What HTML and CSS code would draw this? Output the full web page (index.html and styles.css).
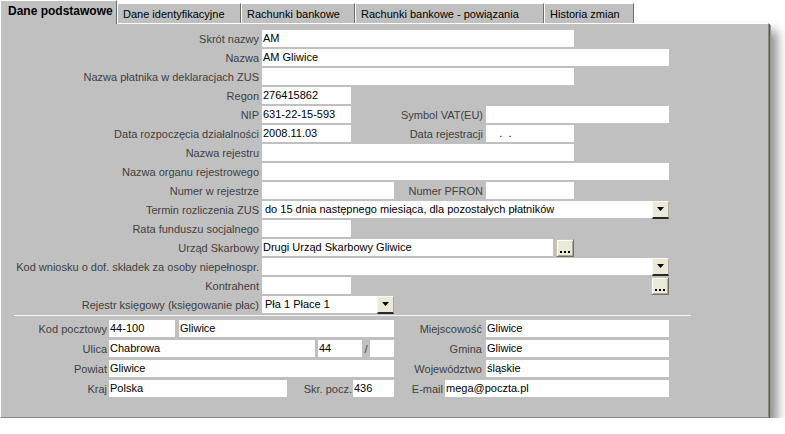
FILE: index.html
```html
<!DOCTYPE html>
<html lang="pl">
<head>
<meta charset="utf-8">
<title>Dane podstawowe</title>
<link rel="stylesheet" href="styles.css">
</head>
<body>
<div class="window">
  <div class="tabs">
    <div class="tab active w1">Dane podstawowe</div>
    <div class="tab w2">Dane identyfikacyjne</div>
    <div class="tab w3">Rachunki bankowe</div>
    <div class="tab w4">Rachunki bankowe - powiązania</div>
    <div class="tab w5">Historia zmian</div>
  </div>
  <div class="panel">
    <div class="row"><span class="lbl">Skrót nazwy</span><span class="inp w312">AM</span></div>
    <div class="row"><span class="lbl">Nazwa</span><span class="inp w407">AM Gliwice</span></div>
    <div class="row"><span class="lbl">Nazwa płatnika w deklaracjach ZUS</span><span class="inp w312"></span></div>
    <div class="row"><span class="lbl">Regon</span><span class="inp w89">276415862</span></div>
    <div class="row"><span class="lbl">NIP</span><span class="inp w89">631-22-15-593</span><span class="vlbl v132">Symbol VAT(EU)</span><span class="inp w183"></span></div>
    <div class="row"><span class="lbl">Data rozpoczęcia działalności</span><span class="inp w89">2008.11.03</span><span class="vlbl v132">Data rejestracji</span><span class="inp w88 pre">    .  .</span></div>
    <div class="row"><span class="lbl">Nazwa rejestru</span><span class="inp w312"></span></div>
    <div class="row"><span class="lbl">Nazwa organu rejestrowego</span><span class="inp w407"></span></div>
    <div class="row"><span class="lbl">Numer w rejestrze</span><span class="inp w132"></span><span class="vlbl v89">Numer PFRON</span><span class="inp w88"></span></div>
    <div class="row"><span class="lbl">Termin rozliczenia ZUS</span><span class="sel w407"><span class="seltxt">do 15 dnia następnego miesiąca, dla pozostałych płatników</span><span class="drop"><svg width="8" height="5" viewBox="0 0 8 5"><path d="M0 0H7L3.5 4Z" fill="#000"/></svg></span></span></div>
    <div class="row"><span class="lbl">Rata funduszu socjalnego</span><span class="inp w89"></span></div>
    <div class="row"><span class="lbl">Urząd Skarbowy</span><span class="inp w291">Drugi Urząd Skarbowy Gliwice</span><span class="dots gap3"><svg width="12" height="2" viewBox="0 0 12 2"><rect x="1" width="2" height="2"/><rect x="5" width="2" height="2"/><rect x="9" width="2" height="2"/></svg></span></div>
    <div class="row"><span class="lbl">Kod wniosku o dof. składek za osoby niepełnospr.</span><span class="sel w407"><span class="seltxt"></span><span class="drop"><svg width="8" height="5" viewBox="0 0 8 5"><path d="M0 0H7L3.5 4Z" fill="#000"/></svg></span></span></div>
    <div class="row"><span class="lbl">Kontrahent</span><span class="inp w89"></span><span class="dots gap300"><svg width="12" height="2" viewBox="0 0 12 2"><rect x="1" width="2" height="2"/><rect x="5" width="2" height="2"/><rect x="9" width="2" height="2"/></svg></span></div>
    <div class="row"><span class="lbl">Rejestr księgowy (księgowanie płac)</span><span class="sel w132"><span class="seltxt">Pła 1 Płace 1</span><span class="drop"><svg width="8" height="5" viewBox="0 0 8 5"><path d="M0 0H7L3.5 4Z" fill="#000"/></svg></span></span></div>

    <div class="sep"></div>

    <div class="brow"><span class="blbl">Kod pocztowy</span><span class="inp w66">44-100</span><span class="inp w215 ml4">Gliwice</span><span class="rlbl">Miejscowość</span><span class="inp w183">Gliwice</span></div>
    <div class="brow"><span class="blbl">Ulica</span><span class="inp w206">Chabrowa</span><span class="inp w44 ml3">44</span><span class="slash">/</span><span class="inp w24"></span><span class="rlbl">Gmina</span><span class="inp w183">Gliwice</span></div>
    <div class="brow"><span class="blbl">Powiat</span><span class="inp w285">Gliwice</span><span class="rlbl">Województwo</span><span class="inp w183">śląskie</span></div>
    <div class="brow"><span class="blbl">Kraj</span><span class="inp w178">Polska</span><span class="klbl">Skr. pocz.</span><span class="inp w41">436</span><span class="elbl">E-mail</span><span class="inp w224">mega@poczta.pl</span></div>
  </div>
</div>
</body>
</html>
```
FILE: styles.css
```css
body {
  margin: 0;
  background: #fff;
  font-family: "Liberation Sans", Arial, sans-serif;
  font-size: 11px;
  color: #000;
}

.window {
  width: 769px;
}

.tabs {
  display: flex;
  align-items: flex-end;
  height: 23px;
  position: relative;
  z-index: 1;
}

.tab {
  box-sizing: border-box;
  height: 20px;
  background: #c0c0c0;
  border-top: 1px solid #fff;
  border-left: 1px solid #fff;
  border-right: 1px solid #6c6c6c;
  padding: 3px 0 0 5px;
  line-height: 14px;
  white-space: nowrap;
}

.tab.active {
  height: 24px;
  margin-bottom: -1px;
  font-weight: bold;
  font-size: 12px;
  padding: 3px 0 0 7px;
}

.w1 { width: 117px; }
.w2 { width: 124px; }
.w3 { width: 114px; }
.w4 { width: 189px; }
.w5 { width: 90px; }

.panel {
  box-sizing: border-box;
  height: 395px;
  background: #c0c0c0;
  border: 1px solid;
  border-color: #fff #8a8a80 #8a8a80 #fff;
  box-shadow: 1px 1px 0 #5a5a50, 2px 2px 0 #9a9a90, 8px 8px 10px rgba(0, 0, 0, 0.45);
  padding-top: 6px;
}

.row {
  display: flex;
  align-items: center;
  height: 17px;
  margin-bottom: 2px;
}

.lbl {
  flex: none;
  width: 258px;
  margin-right: 3px;
  display: flex;
  justify-content: flex-end;
  white-space: nowrap;
  color: #404040;
}

.vlbl {
  flex: none;
  margin-right: 3px;
  display: flex;
  justify-content: flex-end;
  white-space: nowrap;
  color: #404040;
}

.v132 { width: 132px; }
.v89 { width: 89px; }

.inp {
  flex: none;
  box-sizing: border-box;
  height: 17px;
  background: #fff;
  padding: 0 0 0 1px;
  line-height: 17px;
  white-space: nowrap;
  overflow: hidden;
  color: #000;
}

.pre { white-space: pre; }

.w24 { width: 24px; }
.w41 { width: 41px; }
.w44 { width: 44px; }
.w66 { width: 66px; }
.w88 { width: 88px; }
.w89 { width: 89px; }
.w132 { width: 132px; }
.w178 { width: 178px; }
.w183 { width: 183px; }
.w206 { width: 206px; }
.w215 { width: 215px; }
.w224 { width: 224px; }
.w285 { width: 285px; }
.w291 { width: 291px; }
.w312 { width: 312px; }
.w407 { width: 407px; }

.ml3 { margin-left: 3px; }
.ml4 { margin-left: 4px; }

.sel {
  flex: none;
  box-sizing: border-box;
  height: 17px;
  display: flex;
  background: #fff;
}

.seltxt {
  flex: 1;
  padding-left: 3px;
  line-height: 17px;
  white-space: nowrap;
  overflow: hidden;
}

.drop {
  flex: none;
  box-sizing: border-box;
  width: 17px;
  height: 18px;
  background: #ece9d8;
  border-top: 1px solid #f8f7f0;
  border-left: 1px solid #f8f7f0;
  border-right: 1px solid #b0ad9f;
  border-bottom: 2px solid #2a2a20;
  display: flex;
  align-items: center;
  justify-content: center;
}

.drop svg { display: block; }

.dots {
  flex: none;
  box-sizing: border-box;
  width: 18px;
  height: 18px;
  background: #ece9d8;
  border: 1px solid;
  border-color: #c9c6b6 #716f64 #716f64 #c9c6b6;
  box-shadow: inset 1px 1px 0 #fff, inset -1px -1px 0 #aca899;
  display: flex;
  align-items: flex-end;
  justify-content: center;
  padding-bottom: 3px;
}

.dots svg { display: block; fill: #000; }

.gap3 { margin-left: 3px; }
.gap300 { margin-left: 300px; }

.sep {
  height: 1px;
  width: 677px;
  margin: 2px 0 4px 13px;
  background: #f4f4f4;
}

.brow {
  display: flex;
  align-items: center;
  height: 17px;
  margin-bottom: 3px;
}

.blbl {
  flex: none;
  width: 106px;
  margin-right: 2px;
  text-align: right;
  color: #404040;
  white-space: nowrap;
}

.rlbl {
  flex: none;
  width: 88px;
  margin-right: 4px;
  text-align: right;
  color: #404040;
  white-space: nowrap;
}

.klbl {
  flex: none;
  width: 65px;
  margin-right: 1px;
  text-align: right;
  color: #404040;
  white-space: nowrap;
}

.elbl {
  flex: none;
  width: 49px;
  margin-right: 2px;
  text-align: right;
  color: #404040;
  white-space: nowrap;
}

.slash {
  flex: none;
  width: 8px;
  text-align: center;
  color: #404040;
}
```
